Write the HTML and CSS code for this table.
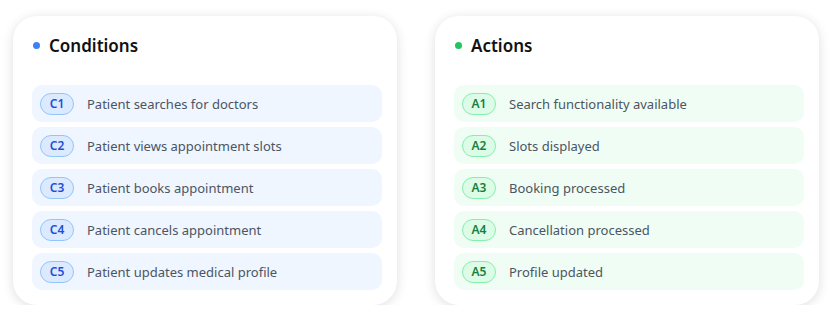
FILE: index.html
```html
<!DOCTYPE html>
<html lang="en">
<head>
    <meta charset="UTF-8">
    <title>Decision table</title>
    <link rel="stylesheet" href="styles.css">
</head>
<body>
    <div class="board">
        <!-- Conditions -->
        <div class="card">
            <div class="card-head">
                <span class="dot dot-blue"></span>
                <h3>Conditions</h3>
            </div>
            <ul class="rows">
                <li class="row row-blue"><span class="tag tag-blue">C1</span>Patient searches for doctors</li>
                <li class="row row-blue"><span class="tag tag-blue">C2</span>Patient views appointment slots</li>
                <li class="row row-blue"><span class="tag tag-blue">C3</span>Patient books appointment</li>
                <li class="row row-blue"><span class="tag tag-blue">C4</span>Patient cancels appointment</li>
                <li class="row row-blue"><span class="tag tag-blue">C5</span>Patient updates medical profile</li>
            </ul>
        </div>

        <!-- Actions -->
        <div class="card">
            <div class="card-head">
                <span class="dot dot-green"></span>
                <h3>Actions</h3>
            </div>
            <ul class="rows">
                <li class="row row-green"><span class="tag tag-green">A1</span>Search functionality available</li>
                <li class="row row-green"><span class="tag tag-green">A2</span>Slots displayed</li>
                <li class="row row-green"><span class="tag tag-green">A3</span>Booking processed</li>
                <li class="row row-green"><span class="tag tag-green">A4</span>Cancellation processed</li>
                <li class="row row-green"><span class="tag tag-green">A5</span>Profile updated</li>
            </ul>
        </div>
    </div>
</body>
</html>
```

FILE: styles.css
```css
body {
    margin: 0;
    background-color: #fff;
    font-family: 'Noto Sans', sans-serif;
    color: #374151;
}

.board {
    display: flex;
    gap: 38px;
    padding: 16px 0 0 13px;
}

.card {
    width: 384px;
    box-sizing: border-box;
    background-color: #fff;
    border-radius: 24px;
    padding: 17px 15px 15px 19px;
    box-shadow: 0 2px 12px rgba(0, 0, 0, 0.13);
}

.card-head {
    display: flex;
    align-items: center;
    gap: 9px;
    height: 24px;
    margin-bottom: 28px;
    padding-left: 1px;
}

.card-head h3 {
    margin: 0;
    font-size: 17px;
    font-weight: 600;
    color: #111;
}

.dot {
    width: 7px;
    height: 7px;
    border-radius: 50%;
}

.dot-blue {
    background-color: #3b82f6;
}

.dot-green {
    background-color: #22c55e;
}

.rows {
    list-style: none;
    margin: 0;
    padding: 0;
    display: flex;
    flex-direction: column;
    gap: 5px;
}

.row {
    display: flex;
    align-items: center;
    gap: 13px;
    height: 37px;
    padding: 0 8px;
    border-radius: 10px;
    font-size: 13px;
    color: #4b5563;
}

.row-blue {
    background-color: #eff6ff;
}

.row-green {
    background-color: #f0fdf4;
}

.tag {
    box-sizing: border-box;
    height: 22px;
    min-width: 34px;
    padding: 0 8px;
    border-radius: 11px;
    display: flex;
    align-items: center;
    justify-content: center;
    font-size: 12px;
    font-weight: 600;
}

.tag-blue {
    background-color: #dbeafe;
    border: 1px solid #93c5fd;
    color: #1d4ed8;
}

.tag-green {
    background-color: #dcfce7;
    border: 1px solid #86efac;
    color: #15803d;
}
```
